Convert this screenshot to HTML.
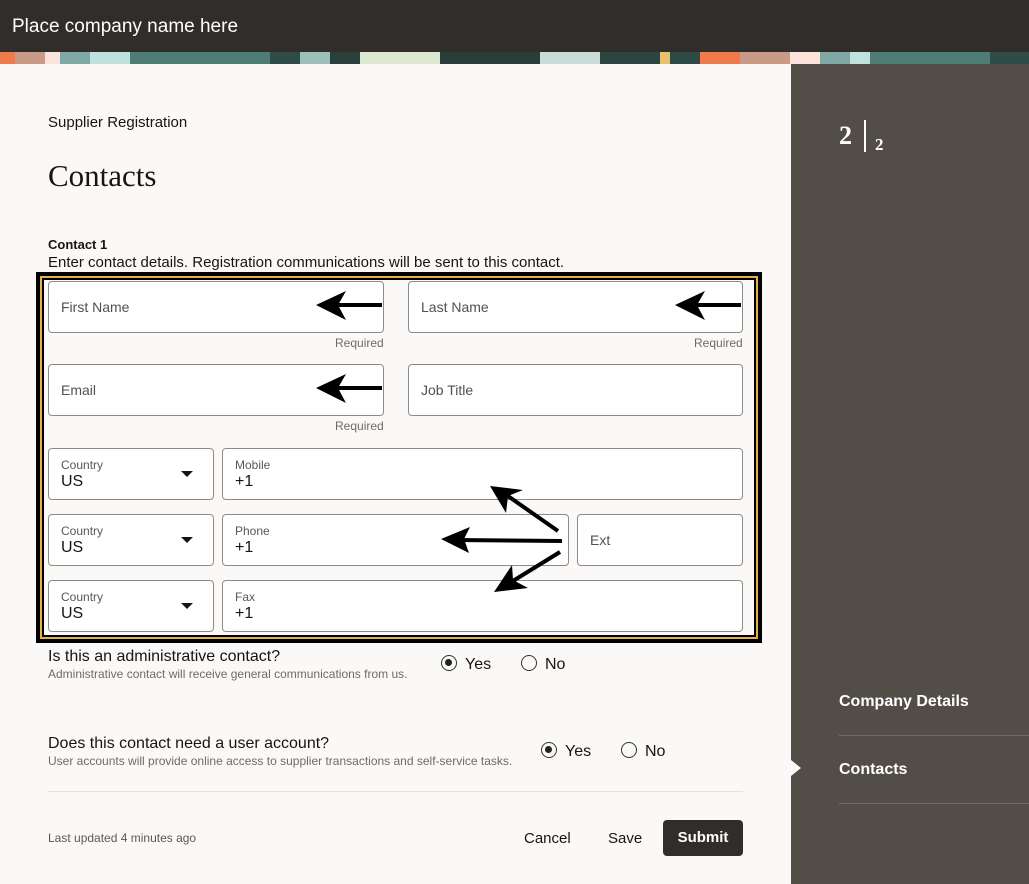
<!DOCTYPE html>
<html><head><style>
*{box-sizing:border-box;margin:0;padding:0}
body{width:1029px;height:884px;overflow:hidden;background:#faf9f7;font-family:"Liberation Sans",sans-serif;position:relative;color:#161513}
.top{position:absolute;left:0;top:0;width:1029px;height:52px;background:#312d2a;color:#fff;font-size:19px;padding:16px 0 0 12px}
.stripe{position:absolute;left:0;top:52px;width:1029px;height:12px;background:linear-gradient(90deg,#f07a4a 0 15px,#c99a88 15px 45px,#fbe2da 45px 60px,#7fa7a4 60px 90px,#bfe0dc 90px 130px,#4e7d75 130px 270px,#2f4d46 270px 300px,#9bbfb9 300px 330px,#2a3f3a 330px 360px,#dce8cf 360px 440px,#2b3d38 440px 540px,#c9dcd7 540px 600px,#2c4540 600px 660px,#e8c070 660px 670px,#2d4a44 670px 700px,#f07a4a 700px 740px,#c99a88 740px 790px,#fbe2da 790px 820px,#7fa7a4 820px 850px,#c0e1dd 850px 870px,#4e7d75 870px 990px,#2f4d46 990px)}
.side{position:absolute;left:791px;top:64px;width:238px;height:820px;background:#534d48;color:#fff}
.abs{position:absolute}
.field{position:absolute;background:#fff;border:1px solid #908b87;border-radius:4px}
.lbl{position:absolute;font-size:14px;color:#55504c}
.small{font-size:12px;color:#5c5753}
.req{position:absolute;font-size:12px;color:#6f6a66}
.val{position:absolute;font-size:16px;color:#161513}
.caret{position:absolute;width:0;height:0;border-left:6px solid transparent;border-right:6px solid transparent;border-top:6px solid #161513}
.radio{display:inline-block;width:16px;height:16px;border:1.5px solid #333;border-radius:50%;vertical-align:-2px;margin-right:8px;position:relative}
.radio.on::after{content:"";position:absolute;left:3px;top:3px;width:7px;height:7px;border-radius:50%;background:#222}
</style></head><body>
<div class="top">Place company name here</div>
<div class="stripe"></div>
<div class="side">
  <div class="abs" style="left:48px;top:57px;font-family:'Liberation Serif',serif;font-size:26px;font-weight:bold">2</div>
  <div class="abs" style="left:73px;top:56px;width:1.5px;height:32px;background:#fff"></div>
  <div class="abs" style="left:84px;top:71px;font-family:'Liberation Serif',serif;font-size:17px;font-weight:bold">2</div>
  <div class="abs" style="left:48px;top:629px;font-size:16px;font-weight:bold">Company Details</div>
  <div class="abs" style="left:48px;top:671px;width:190px;height:1px;background:#736c66"></div>
  <div class="abs" style="left:48px;top:697px;font-size:16px;font-weight:bold">Contacts</div>
  <div class="abs" style="left:48px;top:739px;width:190px;height:1px;background:#736c66"></div>
  <div class="abs" style="left:0;top:696px;width:0;height:0;border-top:8px solid transparent;border-bottom:8px solid transparent;border-left:10px solid #faf9f7"></div>
</div>

<div class="abs" style="left:48px;top:114px;font-size:15px">Supplier Registration</div>
<div class="abs" style="left:48px;top:158px;font-family:'Liberation Serif',serif;font-size:31px">Contacts</div>
<div class="abs" style="left:48px;top:237px;font-size:13px;font-weight:bold">Contact 1</div>
<div class="abs" style="left:48px;top:254px;font-size:15px">Enter contact details. Registration communications will be sent to this contact.</div>

<div class="abs" style="left:36px;top:272px;width:726px;height:371px;border:4px solid #000"></div>
<div class="abs" style="left:40px;top:276px;width:718px;height:363px;border:2px solid #e3b04b"></div>
<div class="abs" style="left:42px;top:278px;width:714px;height:359px;border:2px solid #000"></div>

<div class="field" style="left:48px;top:281px;width:336px;height:52px"></div><div class="lbl" style="left:61px;top:299px">First Name</div><div class="req" style="left:335px;top:336px">Required</div>
<div class="field" style="left:408px;top:281px;width:335px;height:52px"></div><div class="lbl" style="left:421px;top:299px">Last Name</div><div class="req" style="left:694px;top:336px">Required</div>
<div class="field" style="left:48px;top:364px;width:336px;height:52px"></div><div class="lbl" style="left:61px;top:382px">Email</div><div class="req" style="left:335px;top:419px">Required</div>
<div class="field" style="left:408px;top:364px;width:335px;height:52px"></div><div class="lbl" style="left:421px;top:382px">Job Title</div>

<div class="field" style="left:48px;top:448px;width:166px;height:52px"></div><div class="lbl small" style="left:61px;top:458px">Country</div><div class="val" style="left:61px;top:473px">US</div><div class="caret" style="left:181px;top:471px"></div>
<div class="field" style="left:222px;top:448px;width:521px;height:52px"></div><div class="lbl small" style="left:235px;top:458px">Mobile</div><div class="val" style="left:235px;top:473px">+1</div>
<div class="field" style="left:48px;top:514px;width:166px;height:52px"></div><div class="lbl small" style="left:61px;top:524px">Country</div><div class="val" style="left:61px;top:539px">US</div><div class="caret" style="left:181px;top:537px"></div>
<div class="field" style="left:222px;top:514px;width:347px;height:52px"></div><div class="lbl small" style="left:235px;top:524px">Phone</div><div class="val" style="left:235px;top:539px">+1</div>
<div class="field" style="left:577px;top:514px;width:166px;height:52px"></div><div class="lbl" style="left:590px;top:532px">Ext</div>
<div class="field" style="left:48px;top:580px;width:166px;height:52px"></div><div class="lbl small" style="left:61px;top:590px">Country</div><div class="val" style="left:61px;top:605px">US</div><div class="caret" style="left:181px;top:603px"></div>
<div class="field" style="left:222px;top:580px;width:521px;height:52px"></div><div class="lbl small" style="left:235px;top:590px">Fax</div><div class="val" style="left:235px;top:605px">+1</div>

<svg class="abs" style="left:0;top:0" width="1029" height="884">
<g stroke="#000" stroke-width="4" fill="#000">
<line x1="382" y1="305" x2="330" y2="305"/><polygon points="316,305 346,291 338,305 346,320" stroke="none"/>
<line x1="741" y1="305" x2="690" y2="305"/><polygon points="675,305 705,291 697,305 705,320" stroke="none"/>
<line x1="382" y1="388" x2="330" y2="388"/><polygon points="316,388 346,374 338,388 346,403" stroke="none"/>
<line x1="562" y1="541" x2="455" y2="540"/><polygon points="441,539 470,527 464,539 469,553" stroke="none"/>
<line x1="558" y1="531" x2="505" y2="494"/><polygon points="490,486 523,490 508,496 506,513" stroke="none"/>
<line x1="560" y1="552" x2="508" y2="584"/><polygon points="494,592 512,565 513,580 528,588" stroke="none"/>
</g></svg>

<div class="abs" style="left:48px;top:648px;font-size:16px">Is this an administrative contact?</div>
<div class="abs" style="left:48px;top:667px;font-size:12px;color:#6f6a66">Administrative contact will receive general communications from us.</div>
<div class="abs" style="left:441px;top:655px;font-size:16px"><span class="radio on"></span>Yes</div>
<div class="abs" style="left:521px;top:655px;font-size:16px"><span class="radio"></span>No</div>
<div class="abs" style="left:48px;top:735px;font-size:16px">Does this contact need a user account?</div>
<div class="abs" style="left:48px;top:754px;font-size:12px;color:#6f6a66">User accounts will provide online access to supplier transactions and self-service tasks.</div>
<div class="abs" style="left:541px;top:742px;font-size:16px"><span class="radio on"></span>Yes</div>
<div class="abs" style="left:621px;top:742px;font-size:16px"><span class="radio"></span>No</div>
<div class="abs" style="left:48px;top:791px;width:695px;height:1px;background:#e4e1dd"></div>
<div class="abs" style="left:48px;top:831px;font-size:12px;color:#5c5753">Last updated 4 minutes ago</div>
<div class="abs" style="left:524px;top:830px;font-size:15px">Cancel</div>
<div class="abs" style="left:608px;top:830px;font-size:15px">Save</div>
<div class="abs" style="left:663px;top:820px;width:80px;height:36px;background:#312d2a;border-radius:4px;color:#fff;font-size:15px;font-weight:bold;text-align:center;line-height:36px">Submit</div>
</body></html>
